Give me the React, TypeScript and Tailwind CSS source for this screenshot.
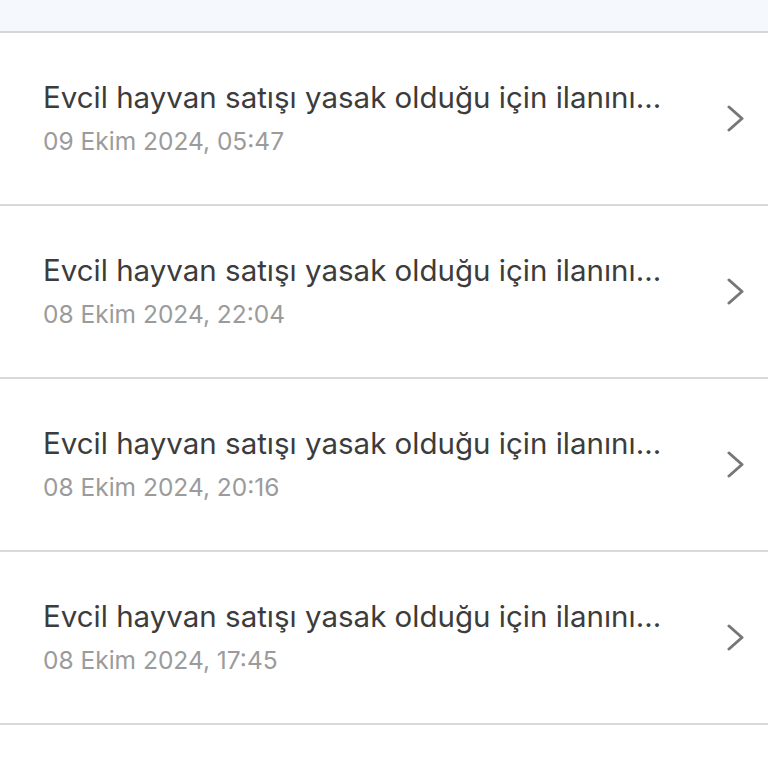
const items = [
  { title: "Evcil hayvan satışı yasak olduğu için ilanını...", date: "09 Ekim 2024, 05:47" },
  { title: "Evcil hayvan satışı yasak olduğu için ilanını...", date: "08 Ekim 2024, 22:04" },
  { title: "Evcil hayvan satışı yasak olduğu için ilanını...", date: "08 Ekim 2024, 20:16" },
  { title: "Evcil hayvan satışı yasak olduğu için ilanını...", date: "08 Ekim 2024, 17:45" },
];

function Chevron() {
  return (
    <svg width="17" height="27" viewBox="0 0 17 27" fill="none" className="shrink-0">
      <polyline
        points="2,2 15,13.5 2,25"
        stroke="#777777"
        strokeWidth="3"
        strokeLinecap="round"
        strokeLinejoin="round"
      />
    </svg>
  );
}

export default function App() {
  return (
    <div className="min-h-[768px] w-full bg-white" style={{ fontFamily: "Inter, 'Noto Sans', sans-serif" }}>
      {/* header strip */}
      <div className="h-[33px] bg-[#f5f9fe] border-b-2 border-[#d6d6d6]" />

      <ul>
        {items.map((it, i) => (
          <li
            key={i}
            className="h-[173px] border-b-2 border-[#d9d9d9] flex items-center pl-[43px] pr-[24px]"
          >
            <div className="flex-1 flex flex-col gap-[10px] pb-[2px]">
              <div className="text-[29.5px] leading-[36px] text-[#3c3c3c]">{it.title}</div>
              <div className="text-[24.5px] leading-[32px] text-[#9b9b9b]">{it.date}</div>
            </div>
            <Chevron />
          </li>
        ))}
      </ul>
    </div>
  );
}
